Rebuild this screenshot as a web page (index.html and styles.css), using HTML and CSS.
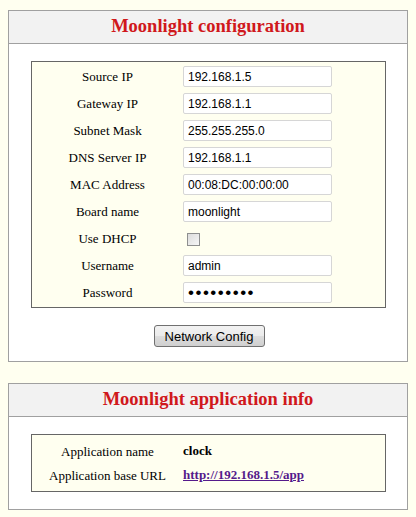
FILE: index.html
```html
<!DOCTYPE html>
<html>
<head>
<meta charset="utf-8">
<title>Moonlight</title>
<link rel="stylesheet" href="styles.css">
</head>
<body>
<div class="panel">
  <div class="panel-head"><h2 class="panel-title">Moonlight configuration</h2></div>
  <form class="panel-body">
    <div class="box form-grid">
      <label class="lbl">Source IP</label><input class="field" type="text" value="192.168.1.5">
      <label class="lbl">Gateway IP</label><input class="field" type="text" value="192.168.1.1">
      <label class="lbl">Subnet Mask</label><input class="field" type="text" value="255.255.255.0">
      <label class="lbl">DNS Server IP</label><input class="field" type="text" value="192.168.1.1">
      <label class="lbl">MAC Address</label><input class="field" type="text" value="00:08:DC:00:00:00">
      <label class="lbl">Board name</label><input class="field" type="text" value="moonlight">
      <label class="lbl">Use DHCP</label><div class="chk-cell"><input class="chk" type="checkbox"></div>
      <label class="lbl">Username</label><input class="field" type="text" value="admin">
      <label class="lbl">Password</label><input class="field pwd" type="password" value="123456789">
    </div>
    <div class="actions"><button type="button" class="btn">Network Config</button></div>
  </form>
</div>

<div class="panel panel-second">
  <div class="panel-head"><h2 class="panel-title">Moonlight application info</h2></div>
  <div class="panel-body panel-body-info">
    <div class="box info-grid">
      <span class="lbl">Application name</span><b class="val">clock</b>
      <span class="lbl">Application base URL</span><a class="val link" href="#">http://192.168.1.5/app</a>
    </div>
  </div>
</div>
</body>
</html>
```

FILE: styles.css
```css
html { background: #fffff0; }
body {
  margin: 10px 8px 8px 8px;
  background: #fffff0;
  font-family: "Liberation Serif", "Times New Roman", serif;
  font-size: 13px;
  color: #000;
}
.panel {
  width: 400px;
  box-sizing: border-box;
  border: 1px solid #a0a0a0;
  background: #ffffff;
}
.panel-second { margin-top: 21px; }
.panel-head {
  height: 32px;
  background: #f2f2f2;
  border-bottom: 1px solid #a0a0a0;
  display: flex;
  align-items: center;
  justify-content: center;
}
.panel-title {
  margin: 0;
  font-family: "Liberation Serif", "Times New Roman", serif;
  font-size: 18.5px;
  font-weight: bold;
  color: #d0181c;
  line-height: 1;
  padding-bottom: 1px;
}
.panel-body {
  margin: 0;
  padding: 17px 21px 14px 22px;
}
.panel-body-info { padding-bottom: 17px; }
.box {
  border: 1px solid #666666;
  background: #fffff0;
  padding: 4px 0;
  display: grid;
  grid-template-columns: 151px 1fr;
  align-items: center;
}
.form-grid { row-gap: 6px; grid-auto-rows: 21px; }
.info-grid { grid-auto-rows: 24px; }
.lbl {
  text-align: center;
  font-size: 13px;
  line-height: 21px;
}
.field {
  width: 149px;
  height: 21px;
  box-sizing: border-box;
  margin: 0;
  border: 1px solid #d6d6d6;
  border-radius: 2px;
  background: #ffffff;
  padding: 0 4px;
  font-family: "Liberation Sans", Arial, sans-serif;
  font-size: 12px;
  color: #000;
  outline: none;
}
.pwd { font-size: 17px; letter-spacing: 1.5px; }
.chk-cell { display: flex; align-items: center; height: 21px; }
.chk {
  appearance: none;
  -webkit-appearance: none;
  width: 13px;
  height: 13px;
  margin: 1px 0 0 4px;
  border: 1px solid #8e8f8f;
  background: linear-gradient(135deg, #dcdcdc, #f6f6f6);
  box-sizing: border-box;
}
.actions {
  display: flex;
  justify-content: center;
  margin-top: 17px;
}
.btn {
  width: 111px;
  height: 22px;
  box-sizing: border-box;
  margin: 0 0 0 1px;
  padding: 0;
  border: 1px solid #707070;
  border-radius: 3px;
  background: linear-gradient(#f2f2f2 0%, #ebebeb 50%, #dddddd 51%, #cfcfcf 100%);
  font-family: "Liberation Sans", Arial, sans-serif;
  font-size: 13px;
  color: #000;
}
.val {
  font-family: "Liberation Serif", "Times New Roman", serif;
  font-size: 13px;
  font-weight: bold;
  justify-self: start;
}
.link { color: #551a8b; text-decoration: underline; }
```
